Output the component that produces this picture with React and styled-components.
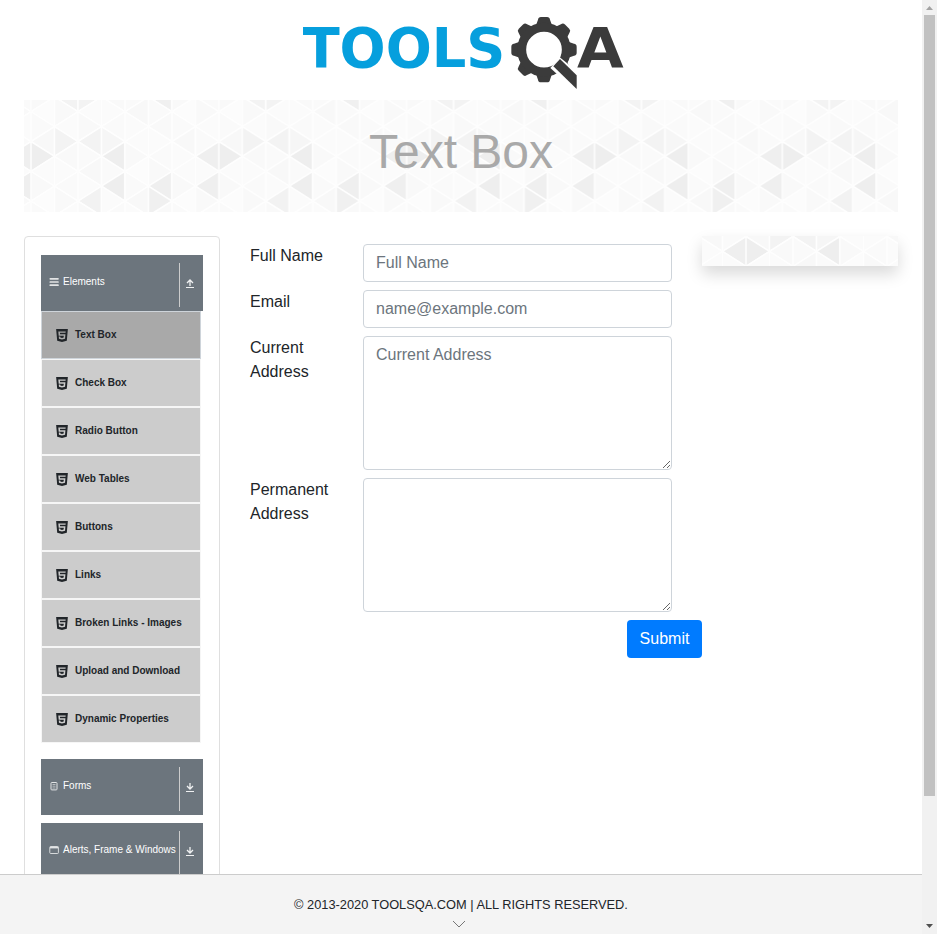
import React from "react";
import styled, { createGlobalStyle } from "styled-components";
import { IoLogoHtml5 } from "react-icons/io";

const GlobalStyle = createGlobalStyle`
  *, *::before, *::after { box-sizing: border-box; }
  body {
    margin: 0;
    overflow: hidden;
    background: #fff;
    color: #212529;
    font: 400 16px/1.5 "Liberation Sans", Arial, sans-serif;
  }
`;

const Shell = styled.div`
  display: grid;
  grid-template-columns: minmax(0, 1fr) 15px;
  height: 934px;
  overflow: hidden;
`;

const Page = styled.div`
  display: flex;
  flex-direction: column;
  min-width: 0;
  min-height: 0;
`;

const Content = styled.div`
  flex: 1;
  min-height: 0;
  overflow: hidden;
  padding: 0 24px;
`;

const Header = styled.header`
  display: flex;
  justify-content: center;
  height: 100px;
  padding: 8px 0 0 8px;
`;

const LogoSvg = styled.svg`
  width: 340px;
  height: 90px;
  font-family: "DejaVu Sans", sans-serif;
  font-weight: 700;
`;

const Banner = styled.div`
  position: relative;
  display: flex;
  justify-content: center;
  height: 112px;
  padding-top: 16px;
  overflow: hidden;
`;

const Title = styled.h1`
  position: relative;
  margin: 0;
  color: #a9a9a9;
  font-size: 48px;
  font-weight: 400;
  line-height: 72px;
`;

const Backdrop = styled.svg`
  position: absolute;
  inset: 0;
  width: 100%;
  height: 100%;
`;

const Columns = styled.div`
  display: grid;
  grid-template-columns: 196px 482px 196px;
  align-items: start;
  margin-top: 24px;
`;

const Sidebar = styled.nav`
  height: 900px;
  padding: 18px 16px;
  border: 1px solid #dfdfdf;
  border-radius: 4px;
`;

const Group = styled.section`
  width: 162px;
  margin-bottom: ${(p) => (p.$open ? 16 : 8)}px;
`;

const GroupHeader = styled.div`
  display: flex;
  align-items: center;
  height: 56px;
  padding-left: 8px;
  background: #6c757d;
  color: #fff;
  font-size: 10px;
`;

const GroupIcon = styled.span`
  display: flex;
  width: 10px;
  height: 10px;
  margin: -2px 4px 0 0;
  color: #e2e4e5;
`;

const GroupName = styled.span`
  flex: 1;
  margin-top: -4px;
  line-height: 15px;
  white-space: nowrap;
`;

const Toggle = styled.span`
  display: flex;
  align-items: center;
  justify-content: center;
  width: 24px;
  height: 44px;
  margin-top: 4px;
  padding: 0 4px 3px 0;
  border-left: 1px solid #ccc;
`;

const Items = styled.ul`
  list-style: none;
  margin: 0;
  padding: 0;
  width: 160px;
`;

const Item = styled.li`
  display: flex;
  align-items: center;
  gap: 7px;
  height: 48px;
  padding-left: 14px;
  border: 1px solid ${(p) => (p.$active ? "#ced4da" : "#f6f6f6")};
  background: ${(p) => (p.$active ? "#a9a9a9" : "#ccc")};
  font-size: 10px;
  font-weight: 700;
  line-height: 15px;
  white-space: nowrap;
`;

const ItemIcon = styled(IoLogoHtml5)`
  width: 12px;
  height: 13px;
`;

const ItemName = styled.span`
  margin-top: -2px;
`;

const Main = styled.main`
  padding-left: 30px;
`;

const Form = styled.form`
  display: flex;
  flex-direction: column;
  gap: 8px;
  padding-top: 8px;
`;

const Field = styled.div`
  display: grid;
  grid-template-columns: 83px 309px;
  column-gap: 30px;
`;

const Label = styled.label`
  display: block;
`;

const Input = styled.input`
  display: block;
  width: 100%;
  height: 38px;
  padding: 6px 12px;
  border: 1px solid #ced4da;
  border-radius: 4px;
  background: #fff;
  color: #495057;
  font: inherit;
  &::placeholder { color: #6c757d; opacity: 1; }
`;

const Area = styled(Input)`
  height: 134px;
  resize: vertical;
`;

const Submit = styled.button`
  align-self: flex-end;
  width: 75px;
  height: 38px;
  padding: 0;
  border: 0;
  border-radius: 4px;
  background: #007bff;
  color: #fff;
  font: inherit;
`;

const SidePanel = styled.aside`
  position: relative;
  height: 30px;
  box-shadow: 0 8px 16px rgba(0, 0, 0, 0.15);
`;

const Footer = styled.footer`
  display: flex;
  flex-direction: column;
  align-items: center;
  height: 60px;
  padding-top: 20px;
  border-top: 1px solid #ccc;
  background: #f4f4f4;
  font-size: 12.8px;
  line-height: 20px;
`;

const Chevron = styled.svg`
  width: 14px;
  height: 8px;
  margin: 5px 4px 0 0;
`;

const ScrollTrack = styled.div`
  display: flex;
  flex-direction: column;
  align-items: center;
  background: #f1f1f1;
`;

const ScrollThumb = styled.div`
  width: 11px;
  height: 781px;
  margin-bottom: auto;
  background: #c1c1c1;
`;

const ScrollArrow = styled.svg`
  width: 15px;
  height: 15px;
`;

const STEP = 23.48;
const HALF = 14.9;
const COLS = 8;
const FIRST_VERTEX = 11.7;

/* Accent triangles, keyed by strip and half-row of the apex. */
const ACCENTS = {
  "0,3": "#eeeeee", "7,3": "#efefef", "7,5": "#efefef",
  "3,3": "#eeeeee", "3,5": "#eeeeee", "5,5": "#efefef",
  "5,6": "#f0f0f0", "2,6": "#f2f2f2", "1,2": "#f3f3f3",
  "2,2": "#f3f3f3", "3,2": "#f6f6f6", "5,-1": "#f0f0f0",
  "1,-1": "#f3f3f3", "2,-1": "#f3f3f3",
};
const SOFT = ["#fbfbfb", "#f9f9f9", "#fcfcfc", "#fafafa", "#f8f8f8", "#fbfbfb"];

/* Each strip alternates left- and right-pointing triangles, half a side apart. */
function buildTriangles() {
  const out = [];
  for (let s = 0; s < COLS; s++) {
    for (let k = -2; k < 9; k++) {
      const left = (s + k) % 2 === 0;
      const base = (left ? s + 1 : s) * STEP;
      const apex = (left ? s : s + 1) * STEP;
      const y = FIRST_VERTEX + k * HALF;
      out.push({
        key: `${s},${k}`,
        points: `${base},${y - HALF} ${apex},${y} ${base},${y + HALF}`,
        fill: ACCENTS[`${s},${k}`] || SOFT[(s * 5 + (k + 2) * 7 + s * k * 3 + 48) % 6],
      });
    }
  }
  return out;
}
const TRIANGLES = buildTriangles();

function TriangleBackdrop({ id, x, y }) {
  return (
    <Backdrop aria-hidden="true">
      <defs>
        <pattern id={id} x={x} y={y} width={STEP * COLS} height="240" patternUnits="userSpaceOnUse">
          <g transform="translate(0 60)" stroke="#fefefe" strokeWidth="1.5" strokeLinejoin="round">
            {TRIANGLES.map((t) => (
              <polygon key={t.key} points={t.points} fill={t.fill} />
            ))}
          </g>
        </pattern>
      </defs>
      <rect width="100%" height="100%" fill={`url(#${id})`} />
    </Backdrop>
  );
}

const GEAR_TEETH = [0, 45, 90, 135, 180, 225, 270, 315];

function Logo() {
  return (
    <LogoSvg viewBox="0 0 1020 270" role="img" aria-label="TOOLSQA">
      <text x="23" y="178" fontSize="168" textLength="608" lengthAdjust="spacingAndGlyphs" fill="#069fdd">TOOLS</text>
      <g fill="#3b3b3b">
        {GEAR_TEETH.map((a) => (
          <path key={a} transform={`rotate(${a} 747 125)`} d="M723 52 L729 35 Q730 27 738 27 H756 Q764 27 765 35 L771 52 Z" />
        ))}
        <circle cx="747" cy="125" r="67" fill="none" stroke="#3b3b3b" strokeWidth="27" />
      </g>
      <path d="M766 180 L794 148 L860 200 V265 Z" fill="#fff" />
      <path d="M775 175 L795 153 L845 202 V243 Z" fill="#3b3b3b" />
      <text x="846" y="178" fontSize="168" textLength="140" lengthAdjust="spacingAndGlyphs" fill="#3b3b3b">A</text>
    </LogoSvg>
  );
}

function ArrowIcon({ up }) {
  return (
    <svg width="8" height="9" viewBox="0 0 8 9" fill="none" stroke="#f0f1f2" strokeWidth="1">
      <path d="M0 8.5H8" />
      {up ? <path d="M4 7V1M1 4L4 1L7 4" strokeWidth="1.3" /> : <path d="M4 0V6M1 3L4 6L7 3" strokeWidth="1.3" />}
    </svg>
  );
}

function MenuIcon() {
  return (
    <svg width="10" height="10" viewBox="0 0 10 10" stroke="currentColor" strokeWidth="1.7" strokeLinecap="round">
      <path d="M1.3 1.8H9M1.3 5H9M1.3 8.2H9" />
    </svg>
  );
}

function FormsIcon() {
  return (
    <svg width="10" height="10" viewBox="0 0 10 10" fill="none" stroke="currentColor">
      <rect x="2" y="1.5" width="6" height="7.4" rx="0.8" />
      <path d="M3.5 3.5H6.5M3.5 5.2H6.5M3.5 7H6.5" strokeWidth="0.8" opacity="0.8" />
    </svg>
  );
}

function WindowIcon() {
  return (
    <svg width="10" height="10" viewBox="0 0 10 10" fill="none" stroke="currentColor">
      <rect x="0.8" y="1.5" width="8.6" height="7" rx="0.8" strokeWidth="0.9" />
      <path d="M1 2.6H9.2" strokeWidth="1.6" />
    </svg>
  );
}

const ELEMENT_ITEMS = [
  "Text Box", "Check Box", "Radio Button", "Web Tables", "Buttons", "Links",
  "Broken Links - Images", "Upload and Download", "Dynamic Properties",
];

function MenuGroup({ icon, name, items }) {
  return (
    <Group $open={Boolean(items)}>
      <GroupHeader>
        <GroupIcon>{icon}</GroupIcon>
        <GroupName>{name}</GroupName>
        <Toggle><ArrowIcon up={Boolean(items)} /></Toggle>
      </GroupHeader>
      {items && (
        <Items>
          {items.map((item, i) => (
            <Item key={item} $active={i === 0}>
              <ItemIcon preserveAspectRatio="none" viewBox="60 32 392 448" />
              <ItemName>{item}</ItemName>
            </Item>
          ))}
        </Items>
      )}
    </Group>
  );
}

export default function App() {
  return (
    <>
      <GlobalStyle />
      <Shell>
        <Page>
          <Content>
            <Header><Logo /></Header>
            <Banner>
              <TriangleBackdrop id="banner-pattern" x={7} y={-60} />
              <Title>Text Box</Title>
            </Banner>
            <Columns>
              <Sidebar>
                <MenuGroup icon={<MenuIcon />} name="Elements" items={ELEMENT_ITEMS} />
                <MenuGroup icon={<FormsIcon />} name="Forms" />
                <MenuGroup icon={<WindowIcon />} name="Alerts, Frame & Windows" />
              </Sidebar>
              <Main>
                <Form onSubmit={(e) => e.preventDefault()}>
                  <Field>
                    <Label htmlFor="name">Full Name</Label>
                    <Input id="name" placeholder="Full Name" />
                  </Field>
                  <Field>
                    <Label htmlFor="email">Email</Label>
                    <Input id="email" type="email" placeholder="name@example.com" />
                  </Field>
                  <Field>
                    <Label htmlFor="current">Current Address</Label>
                    <Area as="textarea" id="current" placeholder="Current Address" />
                  </Field>
                  <Field>
                    <Label htmlFor="permanent">Permanent Address</Label>
                    <Area as="textarea" id="permanent" />
                  </Field>
                  <Submit>Submit</Submit>
                </Form>
              </Main>
              <SidePanel>
                <TriangleBackdrop id="panel-pattern" x={44} y={-101} />
              </SidePanel>
            </Columns>
          </Content>
          <Footer>
            <span>© 2013-2020 TOOLSQA.COM | ALL RIGHTS RESERVED.</span>
            <Chevron viewBox="0 0 14 8" fill="none" stroke="#777" strokeWidth="1">
              <path d="M1 1L7 7L13 1" />
            </Chevron>
          </Footer>
        </Page>
        <ScrollTrack>
          <ScrollArrow viewBox="0 0 15 15"><path d="M4 10L7.5 6L11 10Z" fill="#a3a3a3" /></ScrollArrow>
          <ScrollThumb />
          <ScrollArrow viewBox="0 0 15 15"><path d="M4 5L7.5 9L11 5Z" fill="#505050" /></ScrollArrow>
        </ScrollTrack>
      </Shell>
    </>
  );
}
